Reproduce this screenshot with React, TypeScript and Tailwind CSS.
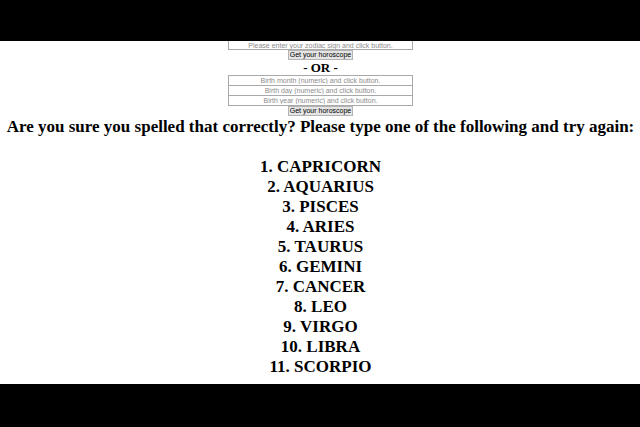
import React from "react";

const signs = [
  "CAPRICORN", "AQUARIUS", "PISCES", "ARIES", "TAURUS", "GEMINI",
  "CANCER", "LEO", "VIRGO", "LIBRA", "SCORPIO",
];

const birthFields = ["month", "day", "year"];

const fieldClass =
  "block w-[185px] border border-[#a9a9a9] bg-white text-center font-['Liberation_Sans',Arial,sans-serif] text-[7px] leading-[8px] placeholder:text-[#8c8c8c]";

function HoroscopeButton() {
  return (
    <button
      type="submit"
      className="block h-[10px] w-[65px] border border-[#b4b4b4] bg-[#e4e4e4] text-center font-['Liberation_Sans',Arial,sans-serif] text-[7px] leading-[8px] whitespace-nowrap text-black"
    >
      Get your horoscope
    </button>
  );
}

export default function App() {
  return (
    <div className="flex min-h-screen flex-col bg-black font-['Liberation_Serif','Times_New_Roman',serif] font-bold text-black">
      <main className="mt-[41px] mb-[43px] flex grow flex-col items-center overflow-hidden bg-white pl-px">
        <form className="flex flex-col items-center font-normal" onSubmit={(e) => e.preventDefault()}>
          <input
            type="text"
            aria-label="Zodiac sign"
            placeholder="Please enter your zodiac sign and click button."
            className={`${fieldClass} h-[9px] border-t-0`}
          />
          <HoroscopeButton />
        </form>
        <p className="text-[13px] leading-[15px]">- OR -</p>
        <form className="flex flex-col items-center font-normal" onSubmit={(e) => e.preventDefault()}>
          {birthFields.map((part) => (
            <input
              key={part}
              type="text"
              inputMode="numeric"
              aria-label={`Birth ${part}`}
              placeholder={`Birth ${part} (numeric) and click button.`}
              className={`${fieldClass} h-[11px] not-first:-mt-px`}
            />
          ))}
          <HoroscopeButton />
        </form>
        <section className="pt-px text-center text-[17px] leading-5">
          <p className="whitespace-nowrap">
            Are you sure you spelled that correctly? Please type one of the following and try again:
          </p>
          <ol className="mt-5">
            {signs.map((sign, i) => (
              <li key={sign}>{`${i + 1}. ${sign}`}</li>
            ))}
          </ol>
        </section>
      </main>
    </div>
  );
}
